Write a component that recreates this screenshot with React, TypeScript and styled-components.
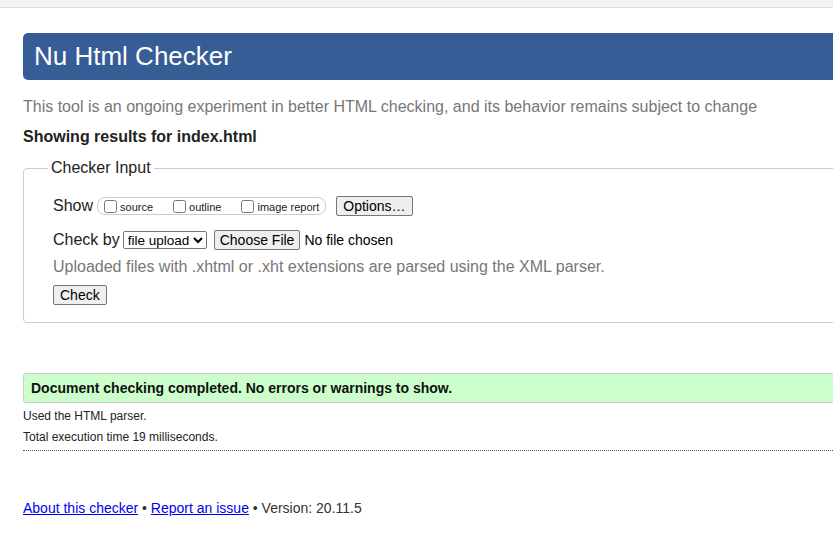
import React from "react";
import styled, { createGlobalStyle } from "styled-components";

const GlobalStyle = createGlobalStyle`
  html, body {
    margin: 0;
    padding: 0;
    overflow: hidden;
    background: #fff;
  }
  body {
    font-family: "Liberation Sans", Arial, sans-serif;
    color: #222;
  }
`;

const TopBar = styled.div`
  height: 7px;
  background: #f2f2f2;
  border-bottom: 1px solid #dcdcdc;
`;

const Page = styled.div`
  width: 1100px;
  padding-left: 23px;
`;

const Title = styled.h1`
  margin: 25px 0 0;
  height: 47px;
  line-height: 47px;
  padding-left: 11px;
  background: #365d95;
  border-radius: 5px 0 0 5px;
  color: #fff;
  font-size: 26px;
  font-weight: normal;
`;

const Tagline = styled.p`
  margin: 17px 0 0;
  font-size: 16px;
  line-height: 20px;
  color: #777;
`;

const ResultsFor = styled.p`
  margin: 10px 0 0;
  font-size: 16px;
  line-height: 20px;
  font-weight: bold;
  color: #222;
`;

const Fieldset = styled.fieldset`
  margin: 11px 0 0;
  padding: 0 29px 17px;
  border: 1px solid #ccc;
  border-radius: 4px;
  min-width: 0;
`;

const Legend = styled.legend`
  margin-left: -5px;
  padding: 0 3px;
  font-size: 16px;
  line-height: 20px;
  color: #222;
`;

const Rows = styled.div`
  display: flex;
  flex-direction: column;
  padding-top: 17px;
`;

const Row = styled.div<{ gap?: number }>`
  display: flex;
  align-items: center;
  height: 22px;
  margin-top: ${({ gap }) => gap ?? 0}px;
  font-size: 16px;
`;

const RowLabel = styled.span`
  font-size: 16px;
  color: #222;
  margin-right: 3px;
`;

const ShowGroup = styled.span`
  display: inline-flex;
  align-items: center;
  height: 16px;
  margin-left: 1px;
  padding: 0 6px 0 6px;
  border: 1px solid #ccc;
  border-radius: 8px;
`;

const CheckItem = styled.label<{ spacing: number }>`
  display: inline-flex;
  align-items: center;
  font-size: 11px;
  margin-right: ${({ spacing }) => spacing}px;
  color: #222;
  input {
    width: 13px;
    height: 13px;
    margin: 0 3px 0 0;
  }
  span {
    padding-top: 2px;
  }
`;

const Button = styled.button<{ tight?: boolean }>`
  font-family: "Liberation Sans", Arial, sans-serif;
  font-size: 14px;
  height: 20px;
  padding: ${({ tight }) => (tight ? "0 5px" : "0 6px")};
  background: #efefef;
  border: 1px solid #767676;
  border-radius: 2px;
  color: #000;
  line-height: 18px;
`;

const OptionsButton = styled(Button)`
  margin-left: 10px;
`;

const Select = styled.select`
  font-family: "Liberation Sans", Arial, sans-serif;
  font-size: 13.5px;
  height: 18px;
  width: 84px;
  padding: 0;
  border: 1px solid #767676;
  border-radius: 2px;
  background: #fff;
  color: #000;
  margin-right: 7px;
`;

const NoFile = styled.span`
  font-size: 14px;
  margin-left: 4px;
  color: #000;
`;

const Note = styled.p`
  margin: 6px 0 0;
  font-size: 16px;
  line-height: 20px;
  color: #777;
`;

const CheckRow = styled.div`
  margin-top: 8px;
`;

const Success = styled.div`
  margin-top: 50px;
  height: 28px;
  line-height: 28px;
  padding-left: 7px;
  background: #ccffcc;
  border: 1px solid #ccc;
  border-radius: 3px;
  font-size: 14px;
  font-weight: bold;
  color: #111;
`;

const Detail = styled.p`
  margin: 0;
  font-size: 12px;
  line-height: 21px;
  color: #222;
`;

const Details = styled.div`
  padding-top: 3px;
  padding-bottom: 2px;
  border-bottom: 1px dotted #555;
`;

const Footer = styled.p`
  margin: 48px 0 0;
  font-size: 14px;
  line-height: 18px;
  color: #333;
  a {
    color: #0000ee;
    text-decoration: underline;
  }
`;

export default function App() {
  return (
    <>
      <GlobalStyle />
      <TopBar />
      <Page>
        <Title>Nu Html Checker</Title>
        <Tagline>
          This tool is an ongoing experiment in better HTML checking, and its
          behavior remains subject to change
        </Tagline>
        <ResultsFor>Showing results for index.html</ResultsFor>
        <Fieldset>
          <Legend>Checker Input</Legend>
          <Rows>
            <Row>
              <RowLabel>Show</RowLabel>
              <ShowGroup>
                <CheckItem spacing={20}>
                  <input type="checkbox" />
                  <span>source</span>
                </CheckItem>
                <CheckItem spacing={20}>
                  <input type="checkbox" />
                  <span>outline</span>
                </CheckItem>
                <CheckItem spacing={0}>
                  <input type="checkbox" />
                  <span>image report</span>
                </CheckItem>
              </ShowGroup>
              <OptionsButton>Options…</OptionsButton>
            </Row>
            <Row gap={12}>
              <RowLabel>Check by</RowLabel>
              <Select defaultValue="file">
                <option value="address">address</option>
                <option value="file">file upload</option>
                <option value="text">text input</option>
              </Select>
              <Button tight>Choose File</Button>
              <NoFile>No file chosen</NoFile>
            </Row>
            <Note>Uploaded files with .xhtml or .xht extensions are parsed using the XML parser.</Note>
            <CheckRow>
              <Button>Check</Button>
            </CheckRow>
          </Rows>
        </Fieldset>
        <Success>Document checking completed. No errors or warnings to show.</Success>
        <Details>
          <Detail>Used the HTML parser.</Detail>
          <Detail>Total execution time 19 milliseconds.</Detail>
        </Details>
        <Footer>
          <a href="#about">About this checker</a> • <a href="#issue">Report an issue</a> • Version: 20.11.5
        </Footer>
      </Page>
    </>
  );
}
